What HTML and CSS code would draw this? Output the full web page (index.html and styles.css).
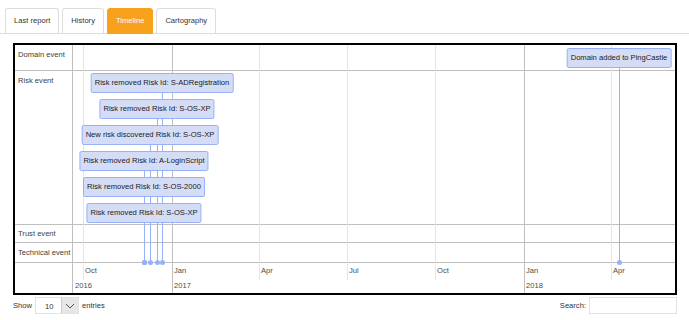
FILE: index.html
```html
<!doctype html>
<html>
  <head>
    <title>Timeline</title>
    <link rel="stylesheet" href="styles.css">
    <script>
      // positions du temps : 1er janvier 2017 = 99px dans le panneau
      var origine = Date.UTC(2017, 0, 1);
      var pxParJour = 0.9644;

      function dateParaX(a, m, j) {
        var jours = (Date.UTC(a, m - 1, j) - origine) / 86400000;
        return 99 + jours * pxParJour;
      }

      var axeY = 217;

      var graduations = [
        { a: 2016, m: 10, mois: "Oct" },
        { a: 2017, m: 1, mois: "Jan", annee: "2017" },
        { a: 2017, m: 4, mois: "Apr" },
        { a: 2017, m: 7, mois: "Jul" },
        { a: 2017, m: 10, mois: "Oct" },
        { a: 2018, m: 1, mois: "Jan", annee: "2018" },
        { a: 2018, m: 4, mois: "Apr" }
      ];

      var evenements = [
        { d: [2018, 4, 9], texte: "Domain added to PingCastle", top: 3 },
        { d: [2016, 12, 22], texte: "Risk removed Risk Id: S-ADRegistration", top: 28 },
        { d: [2016, 12, 16], texte: "Risk removed Risk Id: S-OS-XP", top: 54 },
        { d: [2016, 12, 9], texte: "New risk discovered Risk Id: S-OS-XP", top: 80 },
        { d: [2016, 12, 3], texte: "Risk removed Risk Id: A-LoginScript", top: 106 },
        { d: [2016, 12, 3], texte: "Risk removed Risk Id: S-OS-2000", top: 132 },
        { d: [2016, 12, 3], texte: "Risk removed Risk Id: S-OS-XP", top: 158 }
      ];

      window.onload = function() {
        var panneau = document.getElementById("panneau");
        var html = "";

        html += '<div class="year-label" style="left:2px">2016</div>';
        for (let g of graduations) {
          var x = Math.round(dateParaX(g.a, g.m, 1));
          var classe = g.annee ? "grid major" : "grid minor";
          html += '<div class="' + classe + '" style="left:' + x + 'px"></div>';
          html += '<div class="month-label" style="left:' + (x + 2) + 'px">' + g.mois + '</div>';
          if (g.annee) {
            html += '<div class="year-label" style="left:' + (x + 2) + 'px">' + g.annee + '</div>';
          }
        }

        for (let ev of evenements) {
          var x = Math.round(dateParaX(ev.d[0], ev.d[1], ev.d[2]));
          var basItem = ev.top + 20;
          html += '<div class="item-line" style="left:' + x + 'px; top:' + basItem + 'px; height:' + (axeY - basItem) + 'px"></div>';
          html += '<div class="item-dot" style="left:' + x + 'px; top:' + axeY + 'px"></div>';
        }
        for (let ev of evenements) {
          var x = Math.round(dateParaX(ev.d[0], ev.d[1], ev.d[2]));
          html += '<div class="item" style="left:' + x + 'px; top:' + ev.top + 'px">' + ev.texte + '</div>';
        }

        panneau.innerHTML += html;
      }
    </script>
  </head>
  <body>
    <ul class="tabs">
      <li class="tab">Last report</li>
      <li class="tab">History</li>
      <li class="tab active">Timeline</li>
      <li class="tab">Cartography</li>
    </ul>

    <div class="timeline">
      <div class="labels">
        <div class="label band-domain">Domain event</div>
        <div class="label band-risk">Risk event</div>
        <div class="label band-trust">Trust event</div>
        <div class="label band-tech">Technical event</div>
        <div class="label band-axis"></div>
      </div>
      <div class="panel" id="panneau">
        <div class="band band-domain"></div>
        <div class="band band-risk"></div>
        <div class="band band-trust"></div>
        <div class="band band-tech"></div>
        <div class="band band-axis"></div>
      </div>
    </div>

    <div class="footer">
      <div class="length">
        Show
        <div class="select">
          <span class="select-value">10</span>
          <span class="select-arrow">
            <svg width="10" height="6" viewBox="0 0 10 6"><path d="M1 1 L5 5 L9 1" fill="none" stroke="#555" stroke-width="1"/></svg>
          </span>
        </div>
        entries
      </div>
      <div class="search">
        Search:
        <input class="search-input" type="text" />
      </div>
    </div>
  </body>
</html>
```

FILE: styles.css
```css
/* Estilos gerais */
body {
  font-family: "Liberation Sans", Arial, sans-serif;
  font-size: 7.6px;
  color: #333;
  margin: 0;
  padding: 0;
  background: #fff;
}

/* Onglets */
.tabs {
  display: flex;
  list-style: none;
  margin: 8px 0 0 0;
  padding: 0 0 0 5px;
  border-bottom: 1px solid #ddd;
}

.tab {
  margin-right: 3px;
  margin-bottom: -1px;
  padding: 7px 8px;
  line-height: 10px;
  border: 1px solid #ddd;
  border-bottom-color: transparent;
  border-radius: 3px 3px 0 0;
  color: #333;
}

.tab.active {
  background-color: #f8a11d;
  border-color: #f8a11d;
  color: #fff;
}

/* Timeline */
.timeline {
  display: flex;
  box-sizing: border-box;
  height: 252px;
  margin: 9px 12px 0 13px;
  border: 2px solid #000;
  color: #4d4d4d;
}

.labels {
  display: flex;
  flex-direction: column;
  flex: none;
  width: 57px;
  border-right: 1px solid #bfbfbf;
}

.label {
  padding: 5px 3px 0 3px;
  line-height: 9px;
  white-space: nowrap;
  color: #3d3d3d;
}

.panel {
  position: relative;
  display: flex;
  flex-direction: column;
  flex: 1;
  min-width: 0;
  overflow: hidden;
}

.band-domain,
.band-risk,
.band-trust,
.band-tech,
.band-axis {
  box-sizing: border-box;
}

.band-domain,
.band-risk,
.band-trust,
.band-tech {
  border-bottom: 1px solid #bfbfbf;
}

.band-domain { height: 26px; }
.band-risk { height: 154px; }
.band-trust { height: 18px; }
.band-tech { height: 20px; }
.band-axis { height: 30px; }

.label.band-trust { padding-top: 4px; }

/* Grille */
.grid {
  position: absolute;
  top: 0;
  width: 0;
  border-left: 1px solid #e5e5e5;
}

.grid.minor {
  height: 235px;
}

.grid.major {
  bottom: 0;
  border-left-color: #bfbfbf;
}

.month-label,
.year-label {
  position: absolute;
  line-height: 10px;
  color: #4d4d4d;
  white-space: nowrap;
}

.month-label { top: 221px; }
.year-label { top: 236px; }

/* Items */
.item {
  position: absolute;
  transform: translateX(-50%);
  padding: 4px 3px;
  line-height: 10px;
  white-space: nowrap;
  background-color: #d5ddf6;
  border: 1px solid #97b0f8;
  border-radius: 2px;
  color: #1a1a1a;
}

.item-line {
  position: absolute;
  width: 0;
  border-left: 1px solid #97b0f8;
}

.item-dot {
  position: absolute;
  width: 5px;
  height: 5px;
  margin: -2px 0 0 -2px;
  border-radius: 50%;
  background-color: #97b0f8;
}

/* Rodapé */
.footer {
  display: flex;
  justify-content: space-between;
  align-items: center;
  padding: 2px 12px 0 13px;
}

.length,
.search {
  display: flex;
  align-items: center;
  gap: 3px;
}

.select {
  display: flex;
  width: 44px;
  height: 17px;
  border: 1px solid #e2e2e2;
  box-sizing: border-box;
}

.select-value {
  flex: 1;
  padding: 4px 0 0 9px;
  line-height: 10px;
}

.select-arrow {
  display: flex;
  align-items: center;
  justify-content: center;
  width: 16px;
  background-color: #e6e6e6;
  border-left: 1px solid #ccc;
}

.search-input {
  width: 88px;
  height: 17px;
  margin: 0;
  padding: 0;
  border: 1px solid #e2e2e2;
  box-sizing: border-box;
}
```
